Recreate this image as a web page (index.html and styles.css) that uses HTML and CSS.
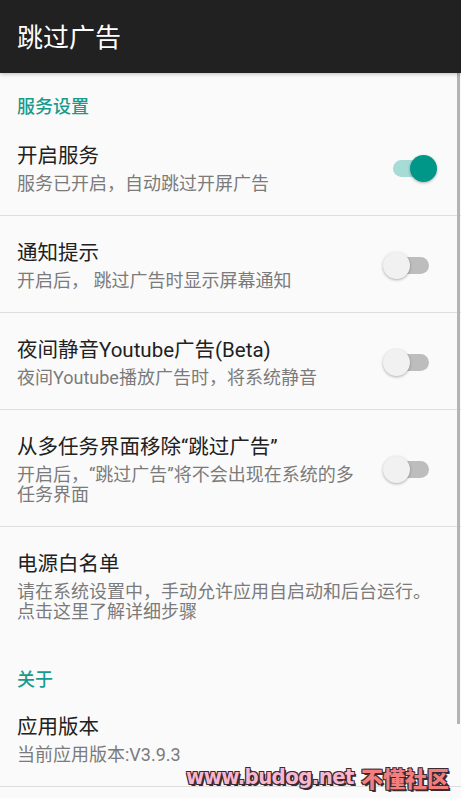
FILE: index.html
```html
<!DOCTYPE html>
<html lang="zh-CN">
<head>
<meta charset="utf-8">
<title>跳过广告</title>
<link rel="stylesheet" href="styles.css">
</head>
<body>
<div class="app">
  <header class="toolbar">
    <h1 class="toolbar-title">跳过广告</h1>
  </header>
  <main class="prefs">
    <div class="category">服务设置</div>
    <div class="pref divided">
      <div class="pref-text">
        <div class="pref-title">开启服务</div>
        <div class="pref-summary">服务已开启，自动跳过开屏广告</div>
      </div>
      <div class="switch on"><span class="track"></span><span class="thumb"></span></div>
    </div>
    <div class="pref divided">
      <div class="pref-text">
        <div class="pref-title">通知提示</div>
        <div class="pref-summary">开启后， 跳过广告时显示屏幕通知</div>
      </div>
      <div class="switch"><span class="track"></span><span class="thumb"></span></div>
    </div>
    <div class="pref divided">
      <div class="pref-text">
        <div class="pref-title">夜间静音Youtube广告(Beta)</div>
        <div class="pref-summary">夜间Youtube播放广告时，将系统静音</div>
      </div>
      <div class="switch"><span class="track"></span><span class="thumb"></span></div>
    </div>
    <div class="pref divided">
      <div class="pref-text">
        <div class="pref-title">从多任务界面移除“跳过广告”</div>
        <div class="pref-summary">开启后，“跳过广告”将不会出现在系统的多任务界面</div>
      </div>
      <div class="switch"><span class="track"></span><span class="thumb"></span></div>
    </div>
    <div class="pref">
      <div class="pref-text">
        <div class="pref-title">电源白名单</div>
        <div class="pref-summary">请在系统设置中，手动允许应用自启动和后台运行。点击这里了解详细步骤</div>
      </div>
    </div>
    <div class="category category-second">关于</div>
    <div class="pref divided">
      <div class="pref-text">
        <div class="pref-title">应用版本</div>
        <div class="pref-summary">当前应用版本:V3.9.3</div>
      </div>
    </div>
  </main>
  <div class="scrollbar"></div>
  <div class="watermark"><span class="wm-latin">www.budog.net</span><span class="wm-cjk">不懂社区</span></div>
</div>
</body>
</html>
```
FILE: styles.css
```css
* { box-sizing: border-box; }
html, body { margin: 0; padding: 0; }
body {
  background: #fafafa;
  font-family: Roboto, "Noto Sans CJK SC", sans-serif;
  color: #212121;
  overflow: hidden;
}
.app {
  position: relative;
  width: 461px;
  height: 798px;
  overflow: hidden;
  background: #fafafa;
}
.toolbar {
  height: 73px;
  background: #212121;
  display: flex;
  align-items: center;
  padding: 2px 0 0 17px;
  box-shadow: 0 1px 4px rgba(0,0,0,0.25);
  position: relative;
  z-index: 1;
}
.toolbar-title {
  margin: 0;
  font-size: 26px;
  font-weight: 400;
  color: #ffffff;
  line-height: 30px;
}
.prefs { display: flex; flex-direction: column; }
.category {
  padding: 24px 17px 2px;
  font-size: 18px;
  line-height: 20px;
  font-weight: 500;
  color: #1a9a8c;
}
.category-second { padding: 27px 17px 0; }
.pref {
  display: flex;
  align-items: center;
  gap: 16px;
  padding: 25px 24px 21.5px 17px;
}
.pref.divided { border-bottom: 1px solid #dedede; }
.pref-text { flex: 1; min-width: 0; }
.pref-title {
  font-size: 20.5px;
  line-height: 25px;
  color: #212121;
}
.pref-summary {
  margin-top: 4.5px;
  font-size: 18px;
  line-height: 20px;
  color: #7b7b7b;
}
.switch {
  position: relative;
  flex: none;
  width: 54px;
  height: 27px;
}
.switch .track {
  position: absolute;
  left: 10px;
  top: 5px;
  width: 36px;
  height: 17px;
  border-radius: 9px;
  background: #bdbdbd;
}
.switch .thumb {
  position: absolute;
  left: 0;
  top: 0;
  width: 27px;
  height: 27px;
  border-radius: 50%;
  background: #f1f1f1;
  box-shadow: 0 1px 3px rgba(0,0,0,0.3);
}
.switch.on .track { background: #a7dbd5; }
.switch.on .thumb { left: 27px; background: #009688; }
.scrollbar {
  position: absolute;
  right: 1px;
  top: 73px;
  width: 3px;
  height: 651px;
  background: #b4b4b4;
}
.watermark {
  position: absolute;
  left: 186px;
  top: 764px;
  display: flex;
  align-items: flex-end;
  gap: 7px;
  white-space: nowrap;
}
.wm-latin {
  font-family: "DejaVu Sans Condensed", "DejaVu Sans", sans-serif;
  font-weight: 700;
  font-size: 22px;
  line-height: 26px;
  letter-spacing: -0.6px;
  color: #f8b6cf;
  text-shadow: 1px 1px 0 #3b2b30, -1px -1px 0 #3b2b30, 1px -1px 0 #3b2b30, -1px 1px 0 #3b2b30, 2px 2px 0 #3b2b30;
}
.wm-cjk {
  font-family: "Noto Sans CJK SC", sans-serif;
  font-weight: 900;
  font-size: 22px;
  line-height: 26px;
  color: #f47e7e;
  text-shadow: 1px 1px 0 #3b2b30, -1px -1px 0 #3b2b30, 1px -1px 0 #3b2b30, -1px 1px 0 #3b2b30, 2px 2px 0 #3b2b30;
}
```
